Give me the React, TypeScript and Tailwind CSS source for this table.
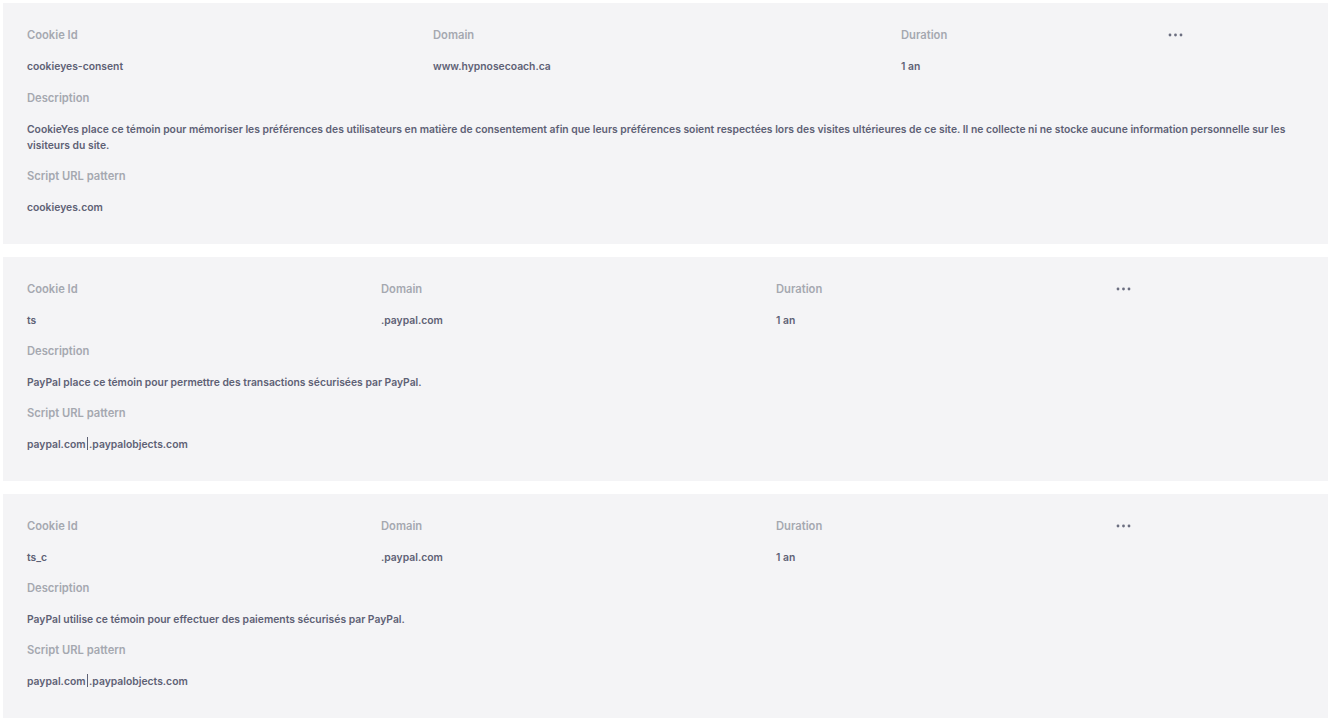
import React from "react";

type Cookie = {
  id: string;
  domain: string;
  duration: string;
  description: string;
  pattern: React.ReactNode;
  cols: string;
  extra?: boolean;
};

const Dots = () => (
  <svg width="15" height="4" viewBox="0 0 15 4" className="block">
    <circle cx="2" cy="2" r="1.4" fill="#6b6e80" />
    <circle cx="7.5" cy="2" r="1.4" fill="#6b6e80" />
    <circle cx="13" cy="2" r="1.4" fill="#6b6e80" />
  </svg>
);

const Label = ({ children }: { children: React.ReactNode }) => (
  <div className="text-[11.2px] leading-4 font-semibold text-[#a5a8b0]">{children}</div>
);
const Value = ({ children }: { children: React.ReactNode }) => (
  <div className="text-[10.35px] leading-4 font-semibold text-[#5e6175]">{children}</div>
);

const CookieCard = ({ c }: { c: Cookie }) => (
  <div className="bg-[#f4f4f6] pl-6 pr-6 pt-6 pb-[29px] flex flex-col gap-[15px]">
    <div className={`grid ${c.cols} gap-y-[15px] ${c.extra ? "mb-px" : ""}`}>
      <Label>Cookie Id</Label>
      <Label>Domain</Label>
      <Label>Duration</Label>
      <div className="h-4 flex items-center">
        <Dots />
      </div>
      <Value>{c.id}</Value>
      <Value>{c.domain}</Value>
      <Value>{c.duration}</Value>
      <div />
    </div>
    <Label>Description</Label>
    <Value>{c.description}</Value>
    <Label>Script URL pattern</Label>
    <Value>{c.pattern}</Value>
  </div>
);

const Pipe = () => (
  <span className="inline-block align-[-2px] w-[1.5px] h-[13px] bg-[#5e6175] mx-[1px]" />
);

const cookies: Cookie[] = [
  {
    id: "cookieyes-consent",
    domain: "www.hypnosecoach.ca",
    duration: "1 an",
    description:
      "CookieYes place ce témoin pour mémoriser les préférences des utilisateurs en matière de consentement afin que leurs préférences soient respectées lors des visites ultérieures de ce site. Il ne collecte ni ne stocke aucune information personnelle sur les visiteurs du site.",
    pattern: "cookieyes.com",
    cols: "grid-cols-[406px_468px_267px_1fr]",
    extra: true,
  },
  {
    id: "ts",
    domain: ".paypal.com",
    duration: "1 an",
    description: "PayPal place ce témoin pour permettre des transactions sécurisées par PayPal.",
    pattern: (
      <>
        paypal.com
        <Pipe />
        .paypalobjects.com
      </>
    ),
    cols: "grid-cols-[354px_395px_340px_1fr]",
  },
  {
    id: "ts_c",
    domain: ".paypal.com",
    duration: "1 an",
    description: "PayPal utilise ce témoin pour effectuer des paiements sécurisés par PayPal.",
    pattern: (
      <>
        paypal.com
        <Pipe />
        .paypalobjects.com
      </>
    ),
    cols: "grid-cols-[354px_395px_340px_1fr]",
  },
];

export default function App() {
  return (
    <div
      className="min-h-screen bg-white px-[3px] pt-[3px] flex flex-col gap-[13px]"
      style={{ fontFamily: "Inter, 'Noto Sans', sans-serif" }}
    >
      {cookies.map((c) => (
        <CookieCard key={c.id} c={c} />
      ))}
    </div>
  );
}
